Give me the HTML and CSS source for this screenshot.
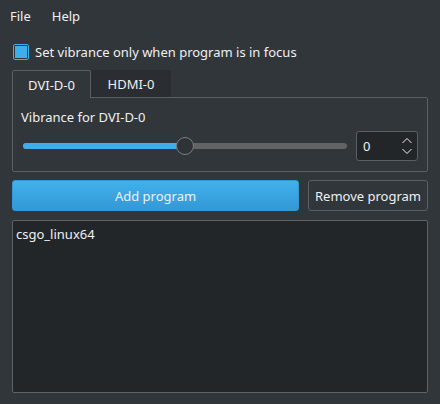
FILE: index.html
```html
<!DOCTYPE html>
<html>
<head>
<meta charset="utf-8">
<link rel="stylesheet" href="styles.css">
</head>
<body>
<div class="menubar">
  <span class="menu-item">File</span>
  <span class="menu-item">Help</span>
</div>
<div class="main">
  <label class="check-row">
    <span class="checkbox"><span class="check-fill"></span></span>
    <span class="check-label">Set vibrance only when program is in focus</span>
  </label>
  <div class="tabs">
    <div class="tabbar">
      <div class="tab active">DVI-D-0</div>
      <div class="tab">HDMI-0</div>
    </div>
    <div class="panel">
      <div class="panel-label">Vibrance for DVI-D-0</div>
      <div class="slider-row">
        <div class="slider">
          <div class="groove"><div class="groove-fill" style="width: 50%"></div></div>
          <div class="handle" style="left: 50%"></div>
        </div>
        <div class="spinbox">
          <span class="spin-value">0</span>
          <span class="spin-arrows">
            <svg width="12" height="20" viewBox="0 0 12 20"><path d="M1.5 7 L6 2.5 L10.5 7" fill="none" stroke="#eff0f1" stroke-width="1"/><path d="M1.5 13 L6 17.5 L10.5 13" fill="none" stroke="#eff0f1" stroke-width="1"/></svg>
          </span>
        </div>
      </div>
    </div>
  </div>
  <div class="buttons">
    <button class="btn primary">Add program</button>
    <button class="btn secondary">Remove program</button>
  </div>
  <div class="list">
    <div class="list-item">csgo_linux64</div>
  </div>
</div>
</body>
</html>
```
FILE: styles.css
```css
* { box-sizing: border-box; }
html, body {
  margin: 0;
  padding: 0;
  width: 440px;
  height: 404px;
  overflow: hidden;
  background: #31363b;
  color: #eff0f1;
  font-family: "Noto Sans", "DejaVu Sans", sans-serif;
  font-size: 13px;
}
.menubar {
  height: 32px;
  display: flex;
  align-items: center;
  padding-left: 10px;
  gap: 21px;
}
.menu-item { line-height: 18px; }
.main {
  padding: 12px 12px 0 12px;
  display: flex;
  flex-direction: column;
}
.check-row {
  display: flex;
  align-items: center;
  height: 16px;
  padding-left: 1px;
  gap: 6px;
}
.checkbox {
  width: 16px;
  height: 16px;
  border: 1px solid #3daee9;
  border-radius: 2px;
  padding: 1px;
  display: block;
}
.check-fill {
  display: block;
  width: 12px;
  height: 12px;
  background: #3daee9;
}
.check-label { line-height: 18px; }
.tabs { margin-top: 10px; }
.tabbar {
  display: flex;
  height: 27px;
}
.tab {
  width: 80px;
  height: 27px;
  display: flex;
  align-items: center;
  justify-content: center;
  background: #2a2e32;
}
.tab.active {
  width: 79px;
  height: 28px;
  background: #31363b;
  border: 1px solid #5b5f63;
  border-bottom: none;
  border-radius: 2px 2px 0 0;
  position: relative;
  z-index: 1;
  padding-top: 1px;
}
.panel {
  border: 1px solid #5b5f63;
  border-radius: 0 2px 2px 2px;
  height: 75px;
  padding: 10px 9px 0 8px;
}
.panel-label { line-height: 18px; }
.slider-row {
  display: flex;
  align-items: center;
  margin-top: 5px;
  height: 30px;
}
.slider {
  position: relative;
  margin-left: 2px;
  width: 324px;
  height: 18px;
  display: flex;
  align-items: center;
}
.groove {
  width: 100%;
  height: 6px;
  background: #616467;
  border-radius: 3px;
  overflow: hidden;
}
.groove-fill {
  height: 100%;
  background: #3daee9;
}
.handle {
  position: absolute;
  top: 0;
  width: 18px;
  height: 18px;
  margin-left: -9px;
  border-radius: 50%;
  border: 1px solid #7a7d80;
  background: #2f3337;
}
.spinbox {
  margin-left: 9px;
  width: 62px;
  height: 30px;
  background: #232629;
  border: 1px solid #5b5f63;
  border-radius: 3px;
  display: flex;
  align-items: center;
  padding-left: 6px;
  padding-right: 4px;
}
.spin-value { flex: 1; line-height: 18px; }
.spin-arrows { display: flex; align-items: center; }
.spin-arrows svg { display: block; }
.buttons {
  display: flex;
  gap: 9px;
  margin-top: 8px;
  height: 31px;
}
.btn {
  font-family: "Noto Sans", "DejaVu Sans", sans-serif;
  font-size: 13px;
  color: #eff0f1;
  border-radius: 3px;
  height: 31px;
  padding: 0;
}
.btn.primary {
  width: 287px;
  border: 1px solid #3498d2;
  background: linear-gradient(#41b1eb, #3398d6);
}
.btn.secondary {
  width: 120px;
  border: 1px solid #5b5f63;
  background: #31363b;
}
.list {
  margin-top: 9px;
  height: 173px;
  background: #232629;
  border: 1px solid #5f6366;
  border-radius: 2px;
  padding: 4px 3px;
}
.list-item { line-height: 18px; }
```
